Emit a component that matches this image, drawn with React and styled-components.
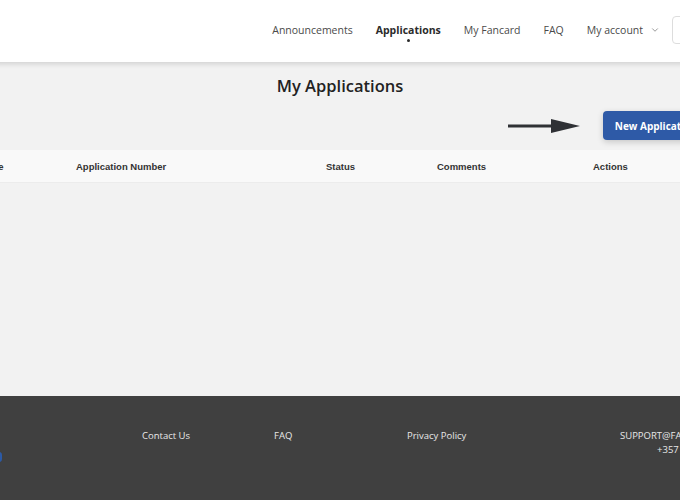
import React from "react";
import styled, { createGlobalStyle } from "styled-components";
import { ChevronDown } from "lucide-react";

const GlobalStyle = createGlobalStyle`
  html, body {
    margin: 0;
    padding: 0;
    background: #f2f2f2;
    overflow: hidden;
  }
  body {
    font-family: "Open Sans", "Liberation Sans", sans-serif;
  }
`;

const navItems = [
  { label: "Announcements" },
  { label: "Applications", active: true },
  { label: "My Fancard" },
  { label: "FAQ" },
];

const columns = [
  { label: "Date", width: 93 },
  { label: "Application Number", width: 250 },
  { label: "Status", width: 111 },
  { label: "Comments", width: 156 },
  { label: "Actions", width: 120 },
];

const footerLinks = ["Contact Us", "FAQ", "Privacy Policy"];

function App() {
  return (
    <>
      <GlobalStyle />
      <Page>
        <Header>
          <Nav>
            {navItems.map((item) => (
              <NavLink key={item.label} $active={item.active}>
                {item.label}
              </NavLink>
            ))}
            <NavLink>
              My account
              <ChevronDown size={10} strokeWidth={1.6} />
            </NavLink>
          </Nav>
          <LangBox />
        </Header>

        <Main>
          <Title>My Applications</Title>
          <ActionRow>
            <Arrow width="73" height="16" viewBox="0 0 73 16">
              <rect x="0" y="6.5" width="46" height="3" fill="#2f3135" />
              <polygon points="43,1 72,8 43,15" fill="#2f3135" />
            </Arrow>
            <PrimaryButton>New Application</PrimaryButton>
          </ActionRow>
          <TableHead>
            {columns.map((col) => (
              <HeadCell key={col.label} $width={col.width}>
                {col.label}
              </HeadCell>
            ))}
          </TableHead>
        </Main>

        <Footer>
          <FooterLogo>
            <LogoMark />
          </FooterLogo>
          {footerLinks.map((link, i) => (
            <FooterLink key={link} $width={[132, 133, 213][i]}>
              {link}
            </FooterLink>
          ))}
          <Contact>
            <span>SUPPORT@FANCARD.CY</span>
            <span>+357 22 123456</span>
          </Contact>
        </Footer>
      </Page>
    </>
  );
}

const Page = styled.div`
  width: 800px;
  margin-left: -60px;
  height: 500px;
  display: flex;
  flex-direction: column;
`;

const Header = styled.header`
  height: 62px;
  padding-bottom: 2px;
  box-sizing: border-box;
  background: #ffffff;
  box-shadow: 0 2px 5px rgba(0, 0, 0, 0.14);
  display: flex;
  align-items: center;
  justify-content: flex-end;
  position: relative;
  z-index: 1;
`;

const Nav = styled.nav`
  display: flex;
  align-items: center;
  gap: 23px;
  margin-right: 12px;
`;

const NavLink = styled.a`
  position: relative;
  display: flex;
  align-items: center;
  gap: 6px;
  font-size: 10.5px;
  line-height: 16px;
  color: ${(p) => (p.$active ? "#2b2b2b" : "#4a4a4a")};
  font-weight: ${(p) => (p.$active ? 700 : 400)};
  cursor: pointer;
  svg {
    color: #666;
    margin-left: 1px;
  }
  &::after {
    content: "";
    display: ${(p) => (p.$active ? "block" : "none")};
    position: absolute;
    left: 50%;
    bottom: -4px;
    width: 3px;
    height: 3px;
    margin-left: -1.5px;
    border-radius: 50%;
    background: #2b2b2b;
  }
`;

const LangBox = styled.div`
  width: 48px;
  height: 26px;
  border: 1px solid #dddddd;
  border-radius: 4px;
  background: #fff;
  margin-right: 18px;
`;

const Main = styled.main`
  flex: 1;
  display: flex;
  flex-direction: column;
`;

const Title = styled.h1`
  margin: 12px 0 0;
  text-align: center;
  font-size: 16.5px;
  line-height: 24px;
  font-weight: 600;
  color: #222;
`;

const ActionRow = styled.div`
  display: flex;
  align-items: center;
  justify-content: flex-end;
  gap: 22px;
  margin-top: 13px;
  padding-right: 31px;
`;

const Arrow = styled.svg`
  display: block;
`;

const PrimaryButton = styled.button`
  height: 29px;
  padding: 0 12px;
  border: none;
  border-radius: 4px;
  background: #2e5aa7;
  color: #fff;
  font-family: "Open Sans", sans-serif;
  font-size: 10px;
  font-weight: 700;
  box-shadow: 0 2px 6px rgba(0, 0, 0, 0.18);
  cursor: pointer;
`;

const TableHead = styled.div`
  margin-top: 10px;
  height: 32px;
  background: #f9f9f9;
  border-bottom: 1px solid #ececec;
  display: flex;
  align-items: center;
  padding-left: 43px;
`;

const HeadCell = styled.div`
  width: ${(p) => p.$width}px;
  flex-shrink: 0;
  font-family: "Liberation Sans", Arial, sans-serif;
  font-size: 9.5px;
  font-weight: 700;
  color: #333;
`;

const Footer = styled.footer`
  height: 104px;
  background: #404040;
  display: flex;
  align-items: flex-start;
  padding-top: 33px;
  box-sizing: border-box;
`;

const FooterLogo = styled.div`
  width: 202px;
  flex-shrink: 0;
  padding-top: 23px;
`;

const LogoMark = styled.div`
  width: 26px;
  height: 10px;
  margin-left: 36px;
  border-radius: 3px;
  background: #2c5aa6;
`;

const FooterLink = styled.a`
  width: ${(p) => p.$width}px;
  flex-shrink: 0;
  font-size: 9.5px;
  line-height: 14px;
  color: #e8e8e8;
`;

const Contact = styled.div`
  display: flex;
  flex-direction: column;
  align-items: flex-end;
  font-size: 9.5px;
  line-height: 14px;
  color: #e8e8e8;
`;

export default App;
